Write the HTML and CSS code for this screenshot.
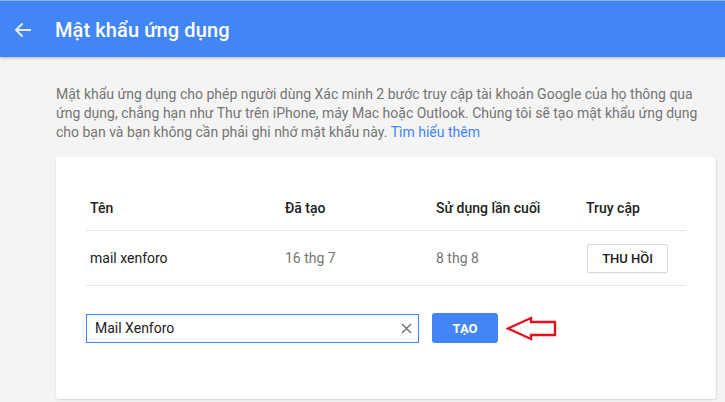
FILE: index.html
```html
<!DOCTYPE html>
<html lang="vi">
<head>
<meta charset="utf-8">
<title>Mật khẩu ứng dụng</title>
<link rel="stylesheet" href="styles.css">
</head>
<body>
<header class="topbar">
  <svg class="back" width="18" height="16" viewBox="0 0 18 16" aria-hidden="true">
    <path d="M17 8H2M8.5 1.5L2 8l6.5 6.5" fill="none" stroke="#ffffff" stroke-width="2"/>
  </svg>
  <h1 class="title">Mật khẩu ứng dụng</h1>
</header>
<main class="content">
  <p class="intro">Mật khẩu ứng dụng cho phép người dùng Xác minh 2 bước truy cập tài khoản Google của họ thông qua ứng dụng, chẳng hạn như Thư trên iPhone, máy Mac hoặc Outlook. Chúng tôi sẽ tạo mật khẩu ứng dụng cho bạn và bạn không cần phải ghi nhớ mật khẩu này. <a class="link" href="#">Tìm hiểu thêm</a></p>
  <section class="card">
    <div class="row head">
      <div class="cell">Tên</div>
      <div class="cell">Đã tạo</div>
      <div class="cell">Sử dụng lần cuối</div>
      <div class="cell">Truy cập</div>
    </div>
    <div class="row data">
      <div class="cell name">mail xenforo</div>
      <div class="cell muted">16 thg 7</div>
      <div class="cell muted">8 thg 8</div>
      <div class="cell"><button class="btn-revoke">THU HỒI</button></div>
    </div>
    <div class="create">
      <div class="field">
        <span class="field-text">Mail Xenforo</span>
        <svg class="clear" width="11" height="11" viewBox="0 0 11 11" aria-hidden="true">
          <path d="M1 1L10 10M10 1L1 10" stroke="#757575" stroke-width="1.5"/>
        </svg>
      </div>
      <button class="btn-create">TẠO</button>
      <svg class="pointer" width="52" height="25" viewBox="0 0 52 25" aria-hidden="true">
        <path d="M2 12.5L25 2V6H49V19H25V23Z" fill="none" stroke="#e8101c" stroke-width="2.4" stroke-linejoin="miter"/>
      </svg>
    </div>
  </section>
</main>
</body>
</html>
```
FILE: styles.css
```css
* { box-sizing: border-box; }
html, body { margin: 0; padding: 0; }
body {
  background: #f4f4f4;
  font-family: Roboto, "Noto Sans", "Liberation Sans", sans-serif;
  width: 725px;
  height: 402px;
  overflow: hidden;
}
.topbar {
  height: 57px;
  background: #4285f4;
  display: flex;
  align-items: center;
  padding-left: 14px;
  padding-top: 2px;
  box-shadow: 0 1px 3px rgba(0,0,0,0.25);
  border-top: 1px solid #8fb4f7;
}
.back { opacity: 0.85; margin-right: 23px; }
.title {
  margin: 0;
  color: #ffffff;
  font-size: 20px;
  font-weight: 500;
  letter-spacing: 0.1px;
}
.content {
  padding: 28px 9px 0 56px;
}
.intro {
  margin: 0 0 15px 0;
  font-size: 14px;
  line-height: 19px;
  color: #757575;
  padding-right: 8px;
}
.link { color: #4285f4; text-decoration: none; }
.card {
  background: #ffffff;
  border-radius: 3px;
  box-shadow: 0 1px 2px rgba(0,0,0,0.12), 1px 0 2px rgba(0,0,0,0.06);
  padding: 29px 30px 56px 30px;
}
.row {
  display: grid;
  grid-template-columns: 195px 151px 150px 104px;
  border-bottom: 1px solid #e6e6e6;
  align-items: center;
}
.cell { padding: 0 4px; font-size: 14px; line-height: 20px; color: #212121; }
.head { padding: 12px 0; }
.head .cell { font-weight: 500; }
.data { height: 55px; }
.muted { color: #757575; }
.btn-revoke {
  width: 81px;
  height: 29px;
  border: 1px solid #dadada;
  border-radius: 2px;
  background: #ffffff;
  font-family: inherit;
  font-size: 13px;
  font-weight: 500;
  color: #212121;
  padding: 0;
  margin-left: 1px;
  box-shadow: 0 1px 1px rgba(0,0,0,0.05);
}
.create {
  display: flex;
  align-items: center;
  margin-top: 27px;
}
.field {
  width: 333px;
  height: 29px;
  border: 1px solid #4285f4;
  display: flex;
  align-items: center;
  justify-content: space-between;
  padding: 0 6px 0 8px;
}
.field-text { font-size: 14px; color: #212121; }
.btn-create {
  margin-left: 13px;
  width: 66px;
  height: 30px;
  border: none;
  border-radius: 3px;
  background: #4285f4;
  color: #ffffff;
  font-family: inherit;
  font-size: 13px;
  font-weight: 700;
  padding: 0;
}
.pointer { margin-left: 8px; margin-top: 1px; }
```
